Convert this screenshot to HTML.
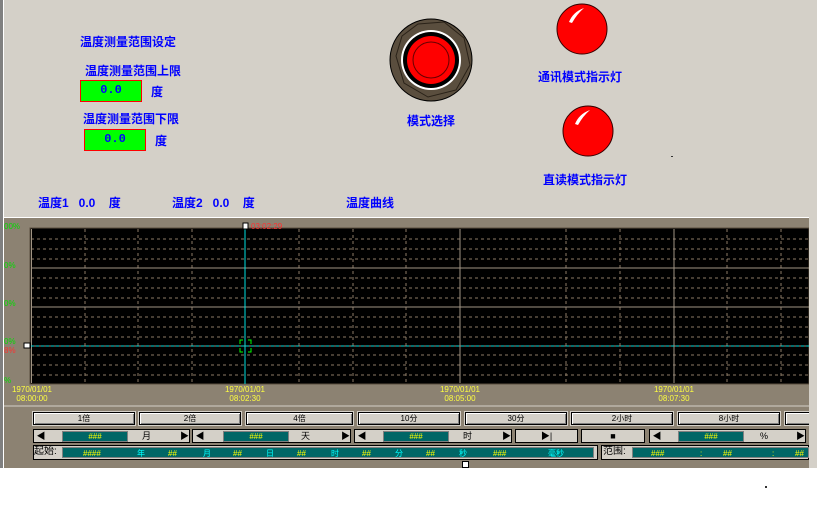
<!DOCTYPE html>
<html><head><meta charset="utf-8"><style>
*{margin:0;padding:0;box-sizing:border-box}
body{width:817px;height:528px;background:#d4d0c8;position:relative;overflow:hidden;font-family:"Liberation Sans","Noto Sans CJK SC",sans-serif}
.a{position:absolute;white-space:nowrap}
.t{color:#0000ff;font-weight:bold;font-size:12px}
.box{position:absolute;background:#00ff00;border:1px solid #ff0000;color:#0000ff;font-weight:bold;font-size:12px;text-align:center;line-height:19px;font-family:"Liberation Mono",monospace}
.btn{position:absolute;height:13px;background:#d4d0c8;border:1px solid #000;box-shadow:inset 1px 1px #fff,inset -1px -1px #808080,0 0 0 1px #d4d0c8;font-size:8px;text-align:center;line-height:11px;color:#000}
.sc{position:absolute;height:14px;background:#d4d0c8;border:1px solid #000;font-size:9px;line-height:12px}
.tl{position:absolute;background:#006666;border:1px solid #808080;color:#ffff00;font-size:8px;text-align:center;line-height:9px;height:11px;top:1px}
.f{position:absolute;background:#006666;height:11px;font-size:8px;line-height:11px;color:#ffff00;border:1px solid #808080}
.f span{position:absolute}
.c{color:#00ffff}
</style></head><body>
<div class="a" style="left:0;top:0;width:3px;height:470px;background:#808080"></div>
<div class="a" style="left:3px;top:0;width:1px;height:470px;background:#fff"></div>
<div class="a t" style="left:80px;top:33px">温度测量范围设定</div>
<div class="a t" style="left:85px;top:62px">温度测量范围上限</div>
<div class="box" style="left:80px;top:80px;width:62px;height:22px">0.0</div>
<div class="a t" style="left:151px;top:83px">度</div>
<div class="a t" style="left:83px;top:110px">温度测量范围下限</div>
<div class="box" style="left:84px;top:129px;width:62px;height:22px">0.0</div>
<div class="a t" style="left:155px;top:132px">度</div>

<svg class="a" style="left:380px;top:10px" width="110" height="100">
<circle cx="51" cy="50" r="41" fill="#5a4e3e" stroke="#000" stroke-width="1"/>
<polygon points="38,14 64,12 84,28 90,55 76,80 48,87 24,73 16,46 22,26" fill="none" stroke="#2a2218" stroke-width="1"/>
<circle cx="51" cy="50" r="30" fill="#fff"/>
<circle cx="51" cy="50" r="28" fill="#000"/>
<circle cx="51" cy="50" r="24" fill="#ff0000"/>
<circle cx="51" cy="50" r="18" fill="none" stroke="#600" stroke-width="1"/>
</svg>
<div class="a t" style="left:407px;top:112px">模式选择</div>

<svg class="a" style="left:555px;top:3px" width="60" height="56"><circle cx="27" cy="26" r="25" fill="#ff0000" stroke="#300" stroke-width="1"/><path d="M14,19 Q18,9 29,5 Q22,11 17,20 Z" fill="#fff"/></svg>
<div class="a t" style="left:538px;top:68px">通讯模式指示灯</div>
<svg class="a" style="left:561px;top:104px" width="60" height="56"><circle cx="27" cy="27" r="25" fill="#ff0000" stroke="#300" stroke-width="1"/><path d="M14,20 Q18,10 29,6 Q22,12 17,21 Z" fill="#fff"/></svg>
<div class="a t" style="left:543px;top:171px">直读模式指示灯</div>
<div class="a" style="left:671px;top:156px;width:2px;height:1px;background:#333"></div>

<div class="a t" style="left:38px;top:194px">温度1&nbsp;&nbsp;&nbsp;0.0&nbsp;&nbsp;&nbsp;&nbsp;度</div>
<div class="a t" style="left:172px;top:194px">温度2&nbsp;&nbsp;&nbsp;0.0&nbsp;&nbsp;&nbsp;&nbsp;度</div>
<div class="a t" style="left:346px;top:194px">温度曲线</div>

<div class="a" style="left:4px;top:217px;width:805px;height:251px;background:#8c8272;border-top:1px solid #fff"></div>
<svg class="a" style="left:0;top:218px" width="810" height="250" font-family="Liberation Sans" font-size="8">
<rect x="30" y="10" width="779" height="156" fill="#000" stroke="#5a4e3e"/>
<g stroke="#8c7a66" stroke-dasharray="3,3">
<line x1="31" x2="809" y1="21" y2="21"/><line x1="31" x2="809" y1="31" y2="31"/><line x1="31" x2="809" y1="41" y2="41"/>
<line x1="31" x2="809" y1="60" y2="60"/><line x1="31" x2="809" y1="70" y2="70"/><line x1="31" x2="809" y1="80" y2="80"/>
<line x1="31" x2="809" y1="99" y2="99"/><line x1="31" x2="809" y1="109" y2="109"/><line x1="31" x2="809" y1="119" y2="119"/>
<line x1="31" x2="809" y1="137" y2="137"/><line x1="31" x2="809" y1="147" y2="147"/><line x1="31" x2="809" y1="157" y2="157"/>
<line x1="85" x2="85" y1="11" y2="165"/><line x1="138" x2="138" y1="11" y2="165"/><line x1="192" x2="192" y1="11" y2="165"/>
<line x1="299" x2="299" y1="11" y2="165"/><line x1="353" x2="353" y1="11" y2="165"/><line x1="406" x2="406" y1="11" y2="165"/>
<line x1="566" x2="566" y1="11" y2="165"/><line x1="620" x2="620" y1="11" y2="165"/><line x1="727" x2="727" y1="11" y2="165"/><line x1="781" x2="781" y1="11" y2="165"/>
</g>
<g stroke="#a09484">
<line x1="31" x2="809" y1="50" y2="50"/><line x1="31" x2="809" y1="89" y2="89"/><line x1="31" x2="809" y1="128" y2="128"/>
<line x1="31.5" x2="31.5" y1="11" y2="165"/><line x1="460" x2="460" y1="11" y2="165"/><line x1="674" x2="674" y1="11" y2="165"/>
</g>
<line x1="31" x2="809" y1="128" y2="128" stroke="#00e0e0" stroke-dasharray="3,2"/>
<line x1="245" x2="245" y1="8" y2="166" stroke="#00e0e0"/>
<path d="M240,126v-4h3M248,122h3v4M240,130v4h3M248,134h3v-4" stroke="#00ff00" fill="none"/>
<rect x="243" y="5" width="5" height="6" fill="#fff" stroke="#000"/>
<rect x="24" y="125" width="6" height="5" fill="#fff" stroke="#000"/>
<text x="251" y="11" fill="#ff3030">03:02:29</text>
<g fill="#00dd00"><text x="4" y="11">00%</text><text x="4" y="50">0%</text><text x="4" y="88">0%</text><text x="4" y="126">0%</text><text x="4" y="165">%</text></g>
<text x="4" y="135" fill="#ff3030">8%</text>
<g fill="#ffff40" text-anchor="middle"><text x="32" y="174">1970/01/01</text><text x="32" y="183">08:00:00</text>
<text x="245" y="174">1970/01/01</text><text x="245" y="183">08:02:30</text>
<text x="460" y="174">1970/01/01</text><text x="460" y="183">08:05:00</text>
<text x="674" y="174">1970/01/01</text><text x="674" y="183">08:07:30</text></g>
<line x1="4" x2="809" y1="188" y2="188" stroke="#d4d0c8"/>
</svg>

<div class="btn" style="left:33px;top:412px;width:102px">1倍</div>
<div class="btn" style="left:139px;top:412px;width:102px">2倍</div>
<div class="btn" style="left:246px;top:412px;width:107px">4倍</div>
<div class="btn" style="left:358px;top:412px;width:102px">10分</div>
<div class="btn" style="left:465px;top:412px;width:102px">30分</div>
<div class="btn" style="left:571px;top:412px;width:102px">2小时</div>
<div class="btn" style="left:678px;top:412px;width:102px">8小时</div>
<div class="btn" style="left:785px;top:412px;width:30px"></div>

<div class="sc" style="left:33px;top:429px;width:157px">&nbsp;◀<div class="tl" style="left:28px;width:66px">###</div><span class="a" style="left:108px">月</span><span class="a" style="left:146px">▶</span></div>
<div class="sc" style="left:192px;top:429px;width:159px">&nbsp;◀<div class="tl" style="left:30px;width:66px">###</div><span class="a" style="left:108px">天</span><span class="a" style="left:148px">▶</span></div>
<div class="sc" style="left:354px;top:429px;width:158px">&nbsp;◀<div class="tl" style="left:28px;width:66px">###</div><span class="a" style="left:108px">时</span><span class="a" style="left:147px">▶</span></div>
<div class="sc" style="left:515px;top:429px;width:63px;text-align:center">▶|</div>
<div class="sc" style="left:581px;top:429px;width:64px;text-align:center">■</div>
<div class="sc" style="left:649px;top:429px;width:157px">&nbsp;◀<div class="tl" style="left:28px;width:66px">###</div><span class="a" style="left:110px">%</span><span class="a" style="left:146px">▶</span></div>

<div class="a" style="left:33px;top:445px;width:565px;height:15px;border:1px solid #000;background:#d4d0c8"></div>
<div class="a" style="left:34px;top:446px;font-size:10px;line-height:12px">起始:</div>
<div class="f" style="left:62px;top:447px;width:532px"><span style="left:20px">####</span><span class="c" style="left:74px">年</span><span style="left:105px">##</span><span class="c" style="left:140px">月</span><span style="left:170px">##</span><span class="c" style="left:203px">日</span><span style="left:234px">##</span><span class="c" style="left:268px">时</span><span style="left:299px">##</span><span class="c" style="left:332px">分</span><span style="left:363px">##</span><span class="c" style="left:396px">秒</span><span style="left:430px">###</span><span class="c" style="left:485px">毫秒</span></div>
<div class="a" style="left:601px;top:445px;width:208px;height:15px;border:1px solid #000;background:#d4d0c8"></div>
<div class="a" style="left:603px;top:446px;font-size:10px;line-height:12px">范围:</div>
<div class="f" style="left:632px;top:447px;width:177px"><span style="left:18px">###</span><span style="left:67px">:</span><span style="left:90px">##</span><span style="left:139px">:</span><span style="left:162px">##</span></div>
<div class="a" style="left:462px;top:461px;width:7px;height:7px;background:#fff;border:1px solid #000"></div>
<div class="a" style="left:809px;top:218px;width:8px;height:250px;background:#d4d0c8"></div>
<div class="a" style="left:0;top:468px;width:817px;height:60px;background:#fff"></div>
<div class="a" style="left:765px;top:486px;width:2px;height:2px;background:#333"></div>
</body></html>
